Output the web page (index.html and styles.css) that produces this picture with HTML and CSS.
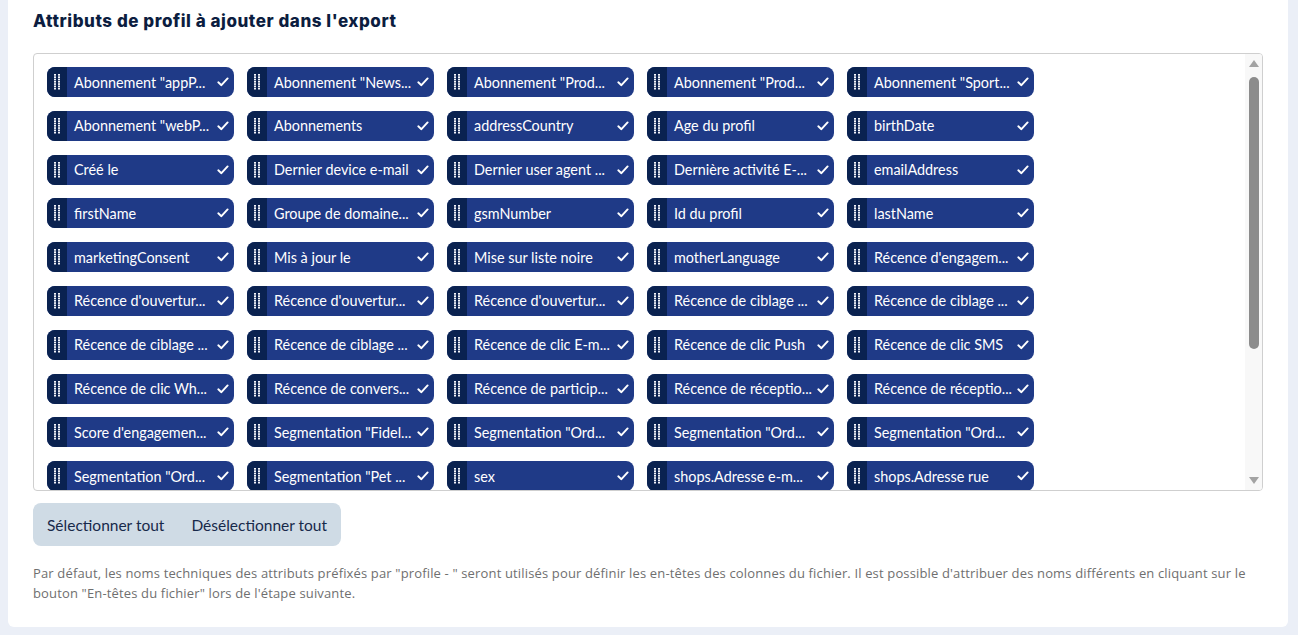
FILE: index.html
```html
<!DOCTYPE html>
<html lang="fr">
<head>
<meta charset="utf-8">
<title>Export</title>
<link rel="stylesheet" href="styles.css">
</head>
<body>
<div class="card">
  <h2 class="title">Attributs de profil à ajouter dans l'export</h2>
  <div class="picker">
    <div class="chips" id="chips">
    </div>
    <div class="scrollbar">
      <div class="arrow up"></div>
      <div class="track"><div class="thumb"></div></div>
      <div class="arrow down"></div>
    </div>
  </div>
  <div class="btn-group">
    <span class="btn">Sélectionner tout</span>
    <span class="btn">Désélectionner tout</span>
  </div>
  <p class="note">Par défaut, les noms techniques des attributs préfixés par "profile - " seront utilisés pour définir les en-têtes des colonnes du fichier. Il est possible d'attribuer des noms différents en cliquant sur le bouton "En-têtes du fichier" lors de l'étape suivante.</p>
</div>
<script src="app.js"></script>
</body>
</html>
```
FILE: app.js
```js
const labels = [
  'Abonnement "appP...', 'Abonnement "News...', 'Abonnement "Prod...', 'Abonnement "Prod...', 'Abonnement "Sport...',
  'Abonnement "webP...', 'Abonnements', 'addressCountry', 'Age du profil', 'birthDate',
  'Créé le', 'Dernier device e-mail', 'Dernier user agent ...', 'Dernière activité E-...', 'emailAddress',
  'firstName', 'Groupe de domaine...', 'gsmNumber', 'Id du profil', 'lastName',
  'marketingConsent', 'Mis à jour le', 'Mise sur liste noire', 'motherLanguage', "Récence d'engagem...",
  "Récence d'ouvertur...", "Récence d'ouvertur...", "Récence d'ouvertur...", 'Récence de ciblage ...', 'Récence de ciblage ...',
  'Récence de ciblage ...', 'Récence de ciblage ...', 'Récence de clic E-m...', 'Récence de clic Push', 'Récence de clic SMS',
  'Récence de clic Wh...', 'Récence de convers...', 'Récence de particip...', 'Récence de réceptio...', 'Récence de réceptio...',
  "Score d'engagemen...", 'Segmentation "Fidel...', 'Segmentation "Ord...', 'Segmentation "Ord...', 'Segmentation "Ord...',
  'Segmentation "Ord...', 'Segmentation "Pet ...', 'sex', 'shops.Adresse e-m...', 'shops.Adresse rue'
];
const rows = [0, 2.3, 4.6, 6.9, 9.2, 11.5, 13.8];
const grip = '<svg width="6" height="16" viewBox="0 0 6 16">' +
  rows.map(y => '<rect x="0" y="' + y + '" width="2" height="1.7" fill="#f2f4fa"/><rect x="4" y="' + y + '" width="2" height="1.7" fill="#f2f4fa"/>').join('') +
  '</svg>';
const check = '<svg width="12" height="10" viewBox="0 0 12 10"><path d="M1.3 5.3 L4.4 8.2 L10.6 1.4" fill="none" stroke="#fff" stroke-width="1.9" stroke-linecap="round" stroke-linejoin="round"/></svg>';
const box = document.getElementById('chips');
box.innerHTML = labels.map(l =>
  '<div class="chip"><span class="handle">' + grip + '</span><span class="label">' + l.replace(/</g,'&lt;') + '</span><span class="check">' + check + '</span></div>'
).join('');
```
FILE: styles.css
```css
* { box-sizing: border-box; }
html, body { margin: 0; padding: 0; }
body {
  background: #ebeff7;
  font-family: "Lato", "Open Sans", sans-serif;
  height: 635px;
  overflow: hidden;
}
.card {
  margin: 0 10px 0 8px;
  background: #fff;
  border-radius: 0 0 6px 6px;
  padding: 10px 25px 18px 25px;
  height: 627px;
}
.title {
  margin: 0 0 21px 0;
  font-family: "Inter", sans-serif;
  font-weight: 800;
  font-size: 17px;
  line-height: 22px;
  color: #0c1d40;
  letter-spacing: 0.55px;
}
.picker {
  display: flex;
  border: 1px solid #cfcfcf;
  border-radius: 4px;
  height: 438px;
  overflow: hidden;
}
.chips {
  flex: 1;
  display: grid;
  grid-template-columns: repeat(5, 187px);
  column-gap: 13px;
  row-gap: 13.8px;
  align-content: start;
  padding: 13px 13px 0 13px;
  overflow: hidden;
}
.chip {
  display: flex;
  align-items: center;
  height: 30px;
  background: #1f3a87;
  border-radius: 8px;
  overflow: hidden;
  color: #fff;
}
.handle {
  width: 20px;
  height: 100%;
  background: #0a2250;
  display: flex;
  align-items: center;
  justify-content: center;
  flex: none;
}
.handle svg { display: block; }
.label {
  flex: 1;
  padding-left: 7px;
  font-size: 14.4px;
  white-space: nowrap;
  overflow: hidden;
}
.check {
  flex: none;
  width: 12px;
  margin: 0 5px 0 4px;
  display: flex;
  align-items: center;
}
.check svg { display: block; }
.scrollbar {
  width: 17px;
  flex: none;
  background: #f8f8f8;
  display: flex;
  flex-direction: column;
  align-items: center;
}
.arrow {
  width: 0; height: 0;
  border-left: 5px solid transparent;
  border-right: 5px solid transparent;
  flex: none;
}
.arrow.up { border-bottom: 7px solid #a3a3a3; margin: 6px 0 10px; }
.arrow.down { border-top: 7px solid #a3a3a3; margin: 6px 0 6px; }
.track { flex: 1; width: 100%; display: flex; justify-content: center; }
.thumb {
  width: 10px;
  height: 272px;
  background: #8c8c8c;
  border-radius: 5px;
}
.btn-group {
  display: inline-flex;
  margin-top: 12px;
  background: #cfdbe5;
  border-radius: 8px;
  height: 43px;
  align-items: center;
  gap: 27px;
  padding: 0 14px;
}
.btn {
  font-family: "Lato", "Open Sans", sans-serif;
  font-size: 15.5px;
  line-height: 24px;
  color: #17294a;
  cursor: pointer;
  white-space: nowrap;
}
.note {
  margin: 17px 0 0 0;
  font-family: "Open Sans", sans-serif;
  font-size: 13px;
  line-height: 20px;
  letter-spacing: 0.15px;
  color: #6f6f6f;
}
```
